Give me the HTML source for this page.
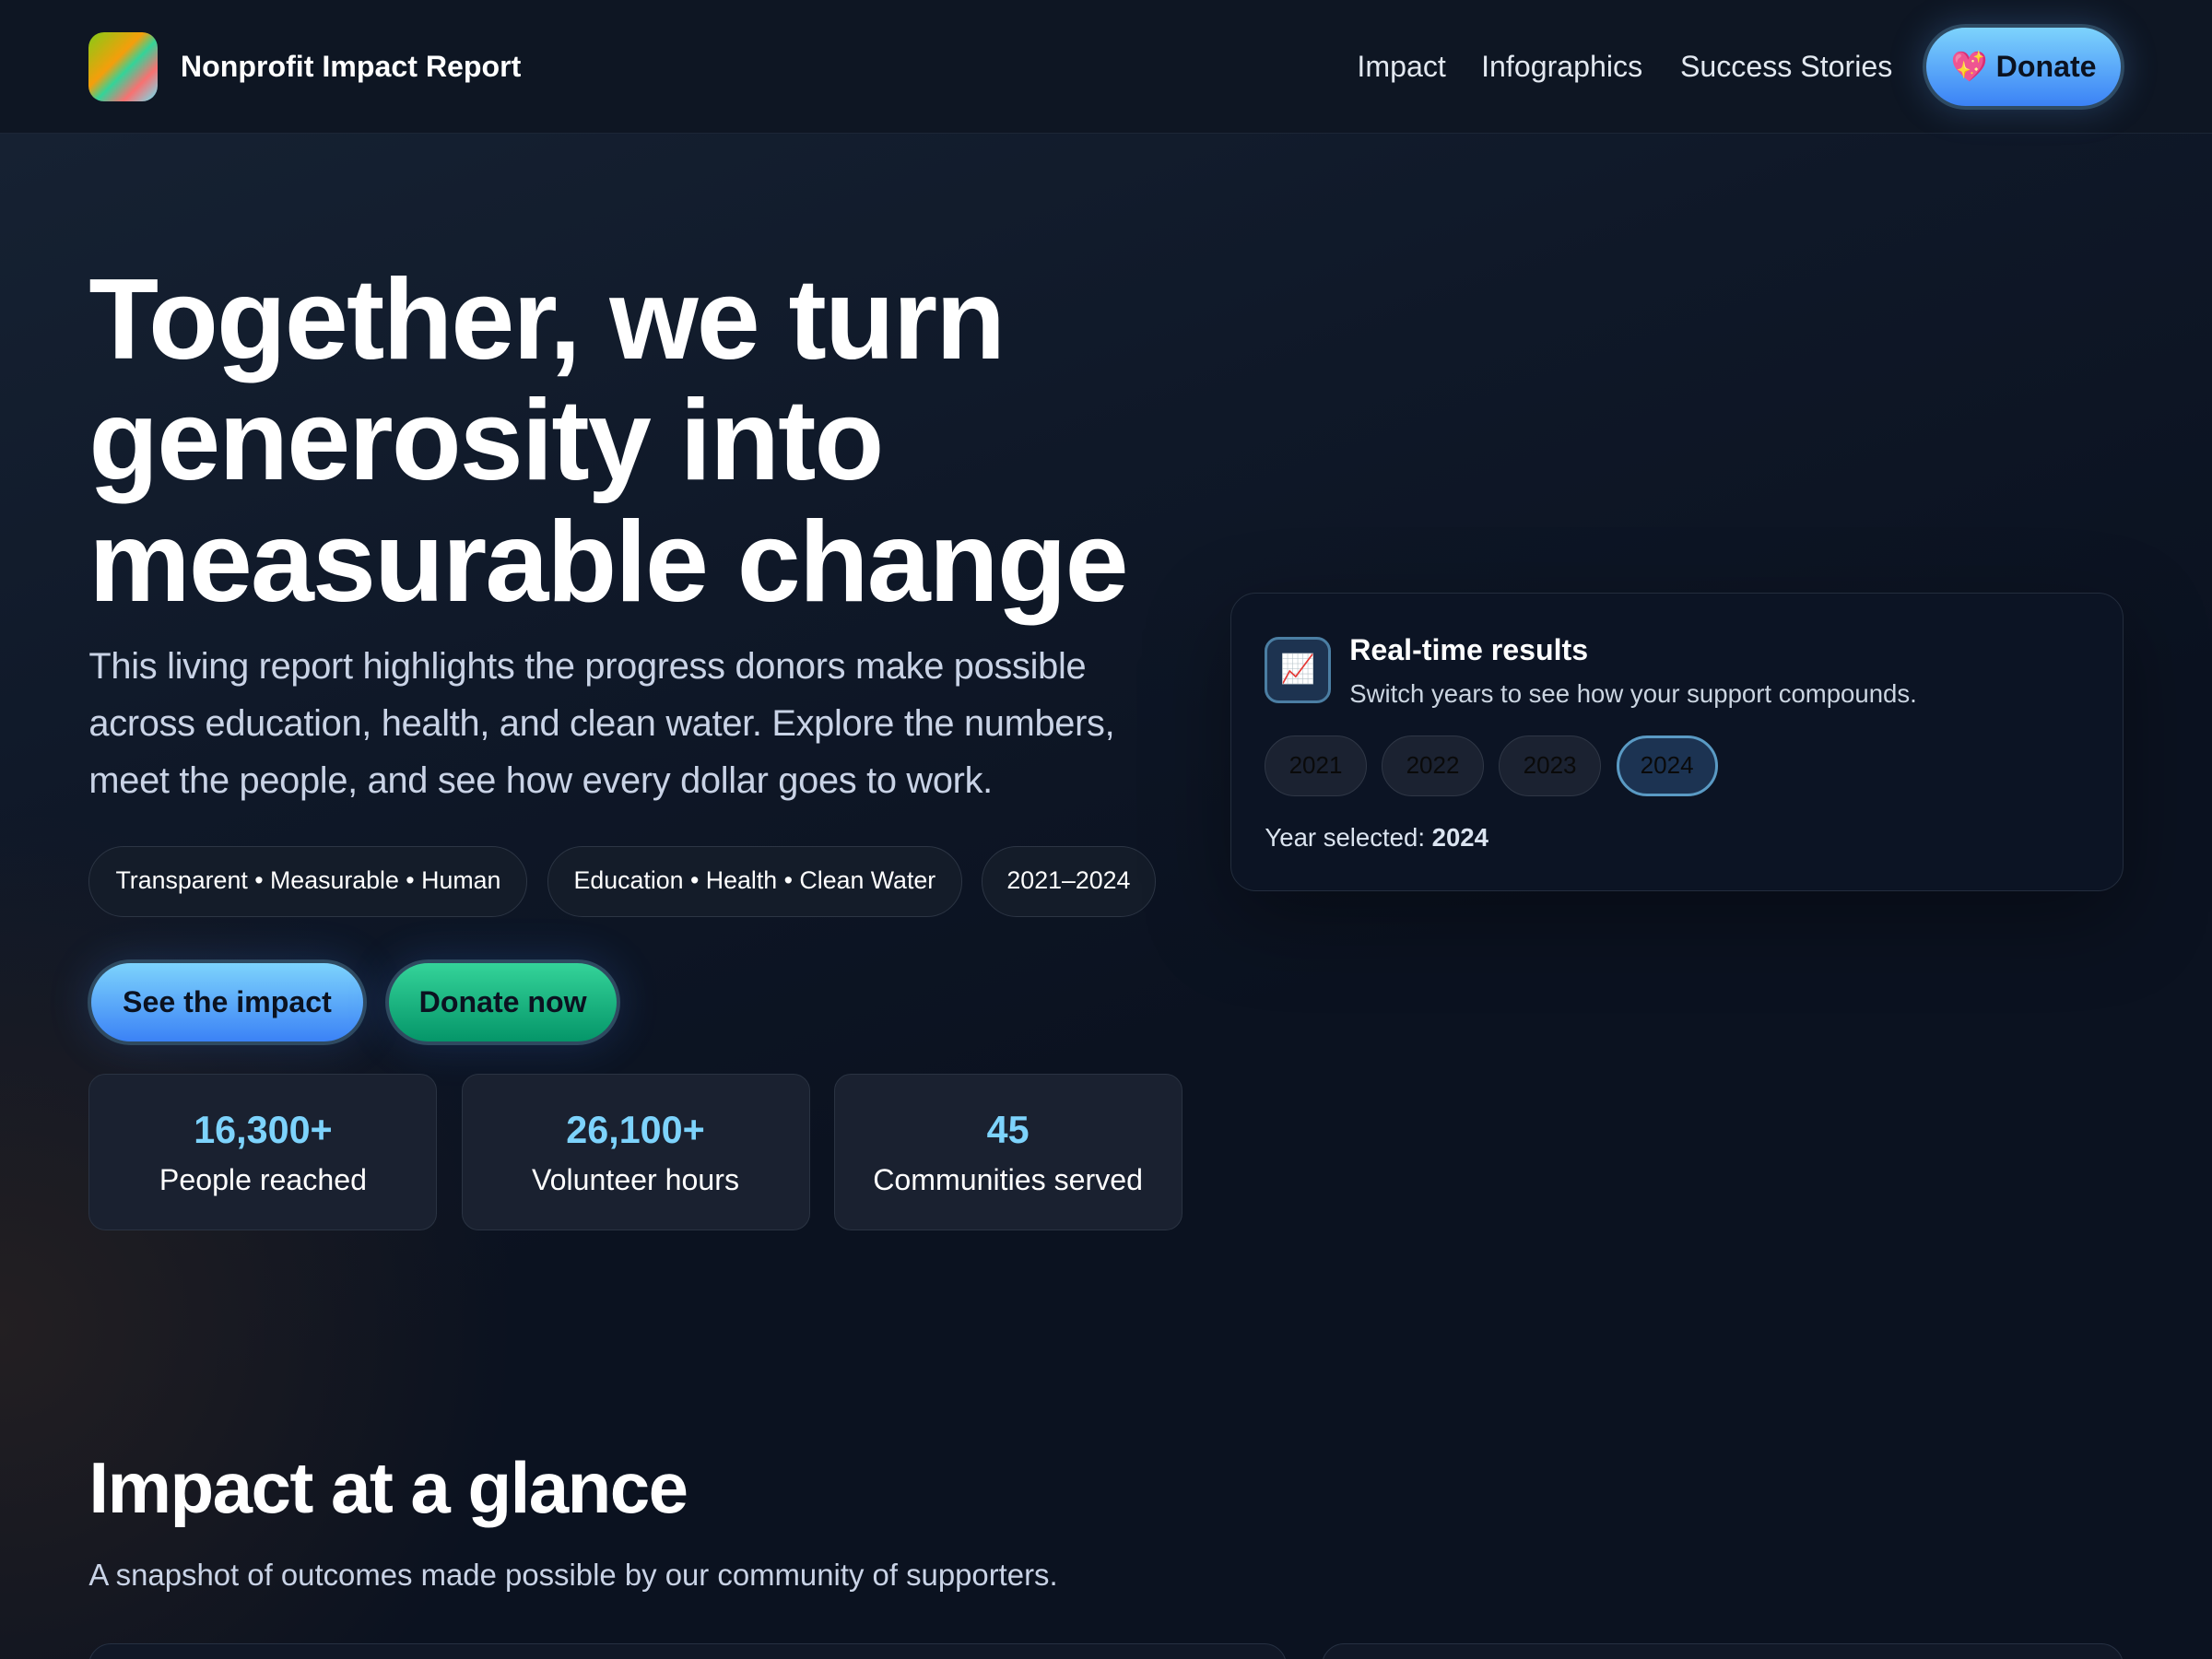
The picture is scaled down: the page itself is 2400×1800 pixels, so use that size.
<!DOCTYPE html>
<html><head><meta charset="utf-8"><style>
*{box-sizing:border-box;margin:0;padding:0}
html,body{width:2400px;height:1800px;overflow:hidden}
body{background:#0b1220;font-family:"Liberation Sans",sans-serif;color:#f1f5f9}
#w{zoom:1.5306;width:1568px;height:1176px;position:relative;overflow:hidden;
background:radial-gradient(ellipse 520px 520px at 0% 80%,#231f22 0%,rgba(33,31,34,0) 70%),
linear-gradient(160deg,#172334 0%,#0f1828 35%,#0b1220 60%,#0b1220 100%)}
.nav{position:absolute;left:0;top:0;width:1568px;height:95px;background:#0e1623;border-bottom:1px solid #1c2636}
.logo{position:absolute;left:63px;top:23px;width:49px;height:49px;border-radius:11px;background:linear-gradient(135deg,#84cc16 0%,#f59e0b 40%,#34d399 55%,#f87171 75%,#67e8f9 100%)}
.brand{position:absolute;left:128px;top:35px;font-size:21px;font-weight:bold;color:#fff}
.nl{position:absolute;top:35px;font-size:21px;color:#e2e8f0}
.don{position:absolute;left:1363px;top:17px;width:143px;height:61px;border-radius:31px;background:linear-gradient(#7dd3fc,#3b82f6);border:3px solid #2e4a62;box-shadow:0 0 24px rgba(96,165,250,.25);font-size:21px;font-weight:bold;color:#0b1220;text-align:center;line-height:55px}
h1{position:absolute;left:63px;top:184px;font-size:81px;line-height:86px;font-weight:bold;letter-spacing:-1.2px;color:#fff}
.p{position:absolute;left:63px;top:453px;width:770px;font-size:26px;line-height:40.5px;color:#c9d3e6;letter-spacing:-0.2px}
.tag{position:absolute;top:600px;height:50px;border-radius:25px;border:1px solid #2c3544;background:#141c29;font-size:17.5px;line-height:48px;text-align:center;color:#fff}
.btn{position:absolute;top:680px;height:61px;border-radius:31px;border:3px solid #2f4a60;font-size:21px;font-weight:bold;color:#0b1220;text-align:center;line-height:55px;box-shadow:0 0 30px rgba(59,130,246,.2)}
.st{position:absolute;top:761px;height:111px;width:247px;border-radius:12px;border:1px solid #2a3342;background:#1a2130;text-align:center}
.st b{display:block;margin-top:24px;font-size:27px;color:#7dd3fc}
.st span{display:block;margin-top:8px;font-size:21px;color:#fff}
.card{position:absolute;left:872px;top:420px;width:633px;height:212px;border-radius:18px;border:1px solid #232d3d;background:#0c1424;box-shadow:0 20px 60px rgba(0,0,0,.35)}
.ic{position:absolute;left:24px;top:31px;width:47px;height:47px;border-radius:10px;background:#1d3350;border:2px solid #4b7ea3;font-size:20px;text-align:center;line-height:43px}
.yr{position:absolute;top:101px;width:72px;height:43px;border-radius:22px;border:1px solid #2f3746;background:#1b2231;color:#0a0a0a;font-size:17px;text-align:center;line-height:41px}
.h2{position:absolute;left:63px;top:1025px;font-size:51px;font-weight:bold;letter-spacing:-1px;color:#fff}
.sub{position:absolute;left:63px;top:1104px;font-size:21.5px;color:#c9d3e6}
.bc{position:absolute;top:1165px;height:40px;border-radius:16px;border:1px solid #263042;background:#111827}
</style></head><body><div id="w">
<div class="nav">
<div class="logo"></div>
<div class="brand">Nonprofit Impact Report</div>
<div class="nl" style="left:962px">Impact</div>
<div class="nl" style="left:1050px">Infographics</div>
<div class="nl" style="left:1191px">Success Stories</div>
<div class="don">💖 Donate</div>
</div>
<h1>Together, we turn<br>generosity into<br>measurable change</h1>
<div class="p">This living report highlights the progress donors make possible across education, health, and clean water. Explore the numbers, meet the people, and see how every dollar goes to work.</div>
<div class="tag" style="left:63px;width:311px">Transparent • Measurable • Human</div>
<div class="tag" style="left:388px;width:294px">Education • Health • Clean Water</div>
<div class="tag" style="left:696px;width:123px">2021–2024</div>
<div class="btn" style="left:62px;width:198px;background:linear-gradient(#7dd3fc,#3b82f6)">See the impact</div>
<div class="btn" style="left:273px;width:167px;background:linear-gradient(#34d399,#059669)">Donate now</div>
<div class="st" style="left:63px"><b>16,300+</b><span>People reached</span></div>
<div class="st" style="left:327px"><b>26,100+</b><span>Volunteer hours</span></div>
<div class="st" style="left:591px"><b>45</b><span>Communities served</span></div>
<div class="card">
<div class="ic">📈</div>
<div style="position:absolute;left:84px;top:28px;font-size:21px;font-weight:bold;color:#fff">Real-time results</div>
<div style="position:absolute;left:84px;top:61px;font-size:18px;color:#cbd5e1">Switch years to see how your support compounds.</div>
<div class="yr" style="left:24px">2021</div>
<div class="yr" style="left:107px">2022</div>
<div class="yr" style="left:190px">2023</div>
<div class="yr" style="left:273px;background:#1c3352;border:2px solid #5a9ac4;line-height:39px">2024</div>
<div style="position:absolute;left:24px;top:163px;font-size:18px;color:#dbe4f0">Year selected: <b>2024</b></div>
</div>
<div class="h2">Impact at a glance</div>
<div class="sub">A snapshot of outcomes made possible by our community of supporters.</div>
<div class="bc" style="left:63px;width:849px"></div>
<div class="bc" style="left:937px;width:568px"></div>
</div></body></html>
